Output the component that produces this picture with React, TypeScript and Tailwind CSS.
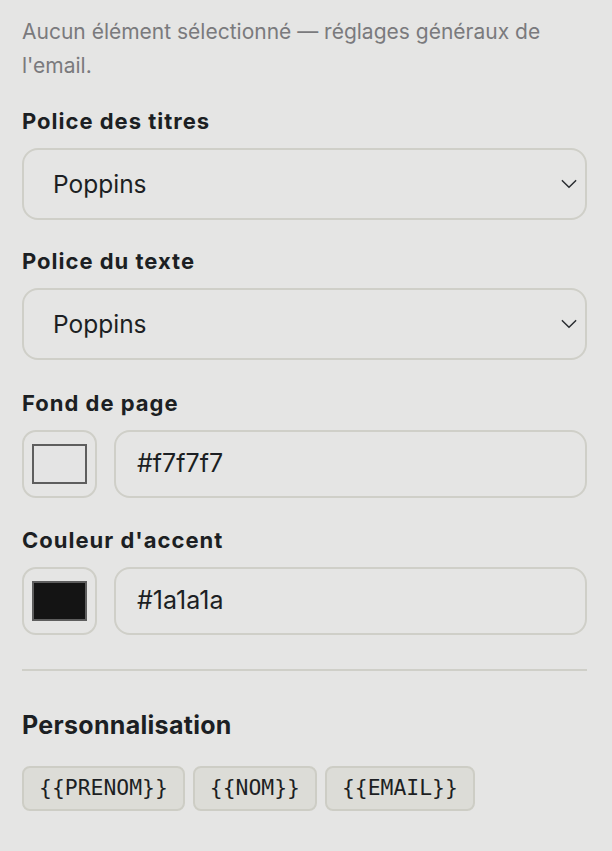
import React from 'react';

const FONT = "font-['Inter','Noto_Sans',sans-serif]";

const Label: React.FC<{ children: React.ReactNode }> = ({ children }) => (
  <h4 className="text-[22px] font-bold leading-[28px] text-[#1c1f23] tracking-[1px]">{children}</h4>
);

const Select: React.FC<{ value: string }> = ({ value }) => (
  <div className="mt-[13px] h-[72px] w-full rounded-[16px] border-2 border-[#cfcfc8] flex items-center justify-between pl-[29px] pr-[6px]">
    <span className="text-[24.5px] text-[#1c1f23]">{value}</span>
    <svg className="w-[20px] h-[20px] text-[#2a2d31]" viewBox="0 0 24 24" fill="none" stroke="currentColor" strokeWidth={1.8} strokeLinecap="round" strokeLinejoin="round">
      <path d="M4 8l8 8 8-8" />
    </svg>
  </div>
);

const ColorRow: React.FC<{ swatch: string; value: string }> = ({ swatch, value }) => (
  <div className="mt-[13px] flex gap-[17px]">
    <div className="w-[75px] h-[68px] shrink-0 rounded-[14px] border-2 border-[#cfcfc8] flex items-center justify-center">
      <div className={`w-[55px] h-[40px] border-2 border-[#5e5e5e] ${swatch}`} />
    </div>
    <div className="flex-1 h-[68px] rounded-[16px] border-2 border-[#cfcfc8] flex items-center pl-[21px]">
      <span className="text-[25px] text-[#1c1f23]">{value}</span>
    </div>
  </div>
);

const Chip: React.FC<{ text: string }> = ({ text }) => (
  <span className="h-[45px] px-[15px] flex items-center rounded-[8px] border-2 border-[#cdcdc5] bg-[#dcdcd7] font-['DejaVu_Sans_Mono',monospace] text-[21.4px] text-[#1c1f23]">
    {text}
  </span>
);

export default function App() {
  return (
    <div className={`min-h-[851px] w-[612px] bg-[#e5e5e4] pl-[22px] pr-[25px] pt-[15px] ${FONT}`}>
      <p className="text-[21px] leading-[34px] text-[#7a7a7d]">
        Aucun élément sélectionné — réglages généraux de l'email.
      </p>

      <div className="mt-[24px]">
        <Label>Police des titres</Label>
        <Select value="Poppins" />
      </div>

      <div className="mt-[27px]">
        <Label>Police du texte</Label>
        <Select value="Poppins" />
      </div>

      <div className="mt-[29px]">
        <Label>Fond de page</Label>
        <ColorRow swatch="bg-[#e4e4e4]" value="#f7f7f7" />
      </div>

      <div className="mt-[28px]">
        <Label>Couleur d'accent</Label>
        <ColorRow swatch="bg-[#141414]" value="#1a1a1a" />
      </div>

      <div className="mt-[34px] h-[2px] bg-[#cfcfc8]" />

      <div className="mt-[39px]">
        <h3 className="text-[25px] font-bold leading-[30px] text-[#1c1f23] tracking-[0.3px]">Personnalisation</h3>
        <div className="mt-[26px] flex gap-[8px]">
          <Chip text="{{PRENOM}}" />
          <Chip text="{{NOM}}" />
          <Chip text="{{EMAIL}}" />
        </div>
      </div>
    </div>
  );
}
